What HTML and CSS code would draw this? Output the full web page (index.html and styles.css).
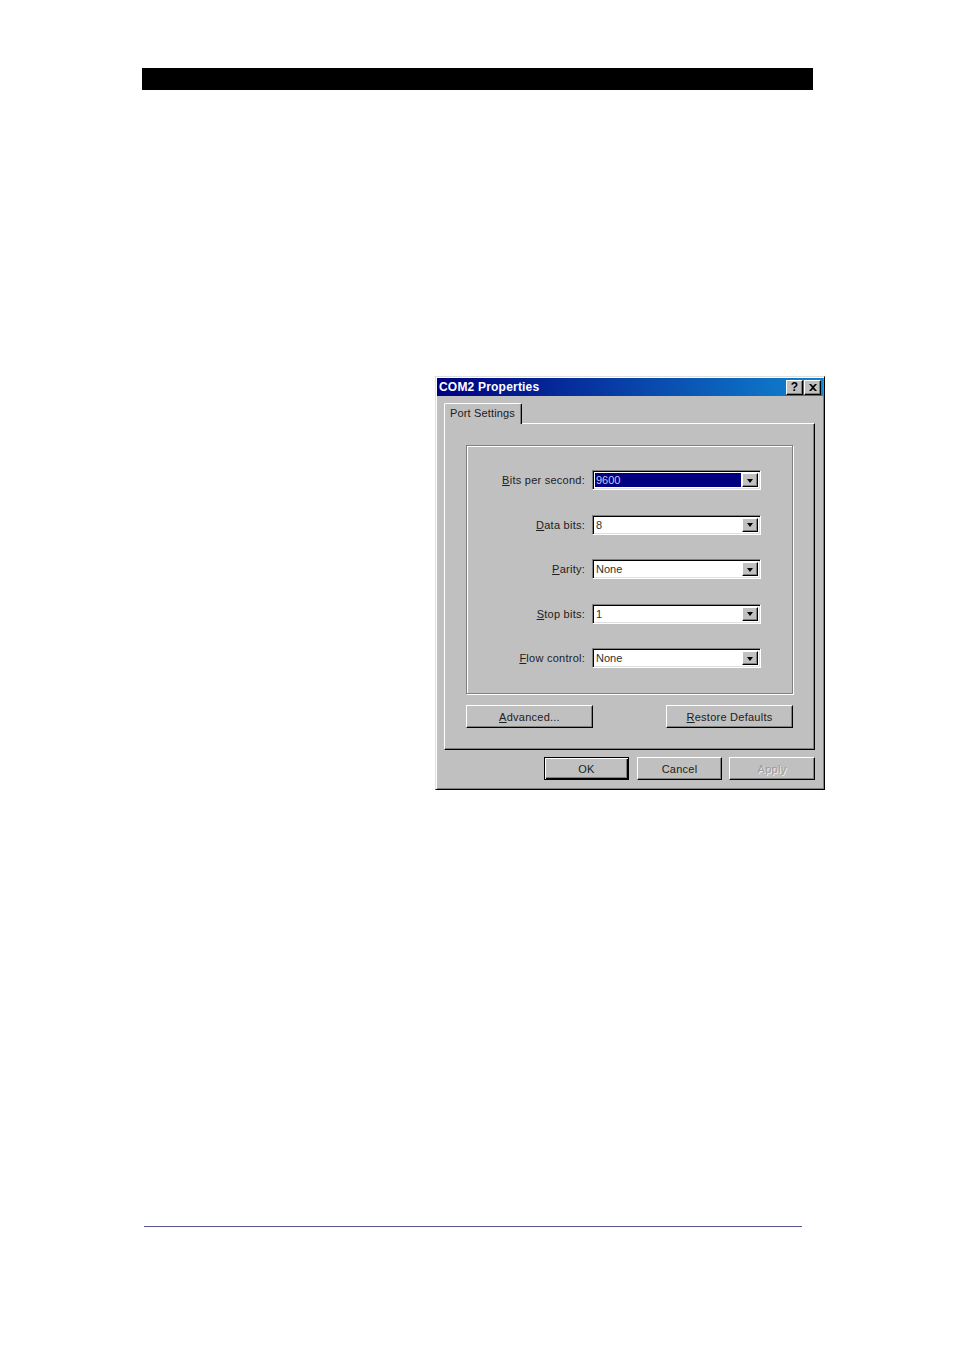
FILE: index.html
```html
<!DOCTYPE html>
<html>
<head>
<meta charset="utf-8">
<title>COM2 Properties</title>
<link rel="stylesheet" href="styles.css">
</head>
<body>
<div class="page">
  <div class="topbar"></div>
  <div class="dialog">
    <div class="titlebar">
      <span class="title">COM2 Properties</span>
      <div class="tbtns">
        <span class="tbtn help">?</span>
        <span class="tbtn close"><svg width="8" height="7" viewBox="0 0 8 7"><path d="M0 0h2l2 2 2-2h2L5 3.5 8 7H6L4 5 2 7H0l3-3.5z" fill="#000"/></svg></span>
      </div>
    </div>
    <div class="body">
      <div class="tabs"><div class="tab">Port Settings</div></div>
      <div class="panel">
        <div class="group">
          <div class="row">
            <span class="label"><u>B</u>its per second:</span>
            <div class="combo"><span class="field sel">9600</span><span class="drop"><span class="arrow"></span></span></div>
          </div>
          <div class="row">
            <span class="label"><u>D</u>ata bits:</span>
            <div class="combo"><span class="field">8</span><span class="drop"><span class="arrow"></span></span></div>
          </div>
          <div class="row">
            <span class="label"><u>P</u>arity:</span>
            <div class="combo"><span class="field">None</span><span class="drop"><span class="arrow"></span></span></div>
          </div>
          <div class="row">
            <span class="label"><u>S</u>top bits:</span>
            <div class="combo"><span class="field">1</span><span class="drop"><span class="arrow"></span></span></div>
          </div>
          <div class="row">
            <span class="label"><u>F</u>low control:</span>
            <div class="combo"><span class="field">None</span><span class="drop"><span class="arrow"></span></span></div>
          </div>
        </div>
        <div class="panelbtns">
          <span class="btn wide"><u>A</u>dvanced...</span>
          <span class="btn wide"><u>R</u>estore Defaults</span>
        </div>
      </div>
      <div class="footer">
        <span class="btn std default">OK</span>
        <span class="btn std">Cancel</span>
        <span class="btn std apply disabled">Apply</span>
      </div>
    </div>
  </div>
  <div class="bottomline"></div>
</div>
</body>
</html>
```
FILE: styles.css
```css
html, body {
  margin: 0;
  padding: 0;
  background: #ffffff;
}
.page {
  width: 954px;
  height: 1350px;
  padding-top: 68px;
  box-sizing: border-box;
  font-family: "Liberation Sans", Arial, sans-serif;
  font-size: 11px;
  color: #000;
}
.topbar {
  margin-left: 142px;
  width: 671px;
  height: 22px;
  background: #000;
}
.dialog {
  margin-top: 286px;
  margin-left: 435px;
  width: 390px;
  box-sizing: border-box;
  background: #c0c0c0;
  border: 1px solid;
  border-color: #dfdfdf #000 #000 #dfdfdf;
  box-shadow: inset 1px 1px #fff, inset -1px -1px #808080;
  padding: 1px;
}
.titlebar {
  height: 18px;
  display: flex;
  align-items: center;
  justify-content: space-between;
  background: linear-gradient(to right, #000080, #1084d0);
  padding-left: 2px;
}
.title {
  color: #fff;
  font-weight: bold;
  font-size: 12px;
  letter-spacing: 0.2px;
}
.tbtns {
  display: flex;
  gap: 1px;
  margin-right: 2px;
}
.tbtn {
  width: 17px;
  height: 15px;
  box-sizing: border-box;
  background: #c0c0c0;
  border: 1px solid;
  border-color: #fff #000 #000 #fff;
  box-shadow: inset -1px -1px #808080;
  display: flex;
  align-items: center;
  justify-content: center;
  font-weight: bold;
  font-size: 12px;
  line-height: 13px;
}
.body {
  padding: 7px 8px 8px 7px;
}
.tabs {
  height: 21px;
  display: flex;
  align-items: flex-end;
  position: relative;
  z-index: 1;
  margin-bottom: -1px;
}
.tab {
  height: 21px;
  width: 78px;
  box-sizing: border-box;
  border: 1px solid;
  border-color: #fff #000 transparent #fff;
  border-bottom: none;
  border-radius: 2px 2px 0 0;
  box-shadow: inset -1px 0 #808080;
  background: #c0c0c0;
  padding: 3px 0 0 5px;
  letter-spacing: 0.15px;
  color: #202020;
}
.panel {
  height: 327px;
  box-sizing: border-box;
  border: 1px solid;
  border-color: #fff #000 #000 #fff;
  box-shadow: inset -1px -1px #808080;
  padding: 21px;
  display: flex;
  flex-direction: column;
}
.group {
  height: 249px;
  box-sizing: border-box;
  border: 1px solid #808080;
  box-shadow: inset 1px 1px #fff, 1px 1px #fff;
  padding-top: 24px;
  display: flex;
  flex-direction: column;
  gap: 24.5px;
}
.row {
  display: flex;
  align-items: center;
  height: 20px;
}
.label {
  width: 118px;
  text-align: right;
  margin-right: 7px;
  letter-spacing: 0.25px;
  color: #202020;
}
.combo {
  width: 169px;
  height: 20px;
  box-sizing: border-box;
  border: 1px solid;
  border-color: #808080 #fff #fff #808080;
  box-shadow: inset 1px 1px #000, inset -1px -1px #dfdfdf;
  background: #fff;
  padding: 2px;
  display: flex;
  align-items: stretch;
}
.field {
  flex: 1;
  padding-left: 1px;
  line-height: 14px;
  color: #303030;
}
.field.sel {
  background: #000080;
  color: #c8c8f0;
  margin-right: 1px;
}
.drop {
  width: 16px;
  box-sizing: border-box;
  background: #c0c0c0;
  border: 1px solid;
  border-color: #fff #000 #000 #fff;
  box-shadow: inset -1px -1px #808080;
  display: flex;
  align-items: center;
  justify-content: center;
}
.arrow {
  width: 0;
  height: 0;
  border-left: 3.5px solid transparent;
  border-right: 3.5px solid transparent;
  border-top: 4px solid #000;
  margin-top: 1px;
}
.panelbtns {
  margin-top: 11px;
  display: flex;
  justify-content: space-between;
}
.btn {
  height: 23px;
  box-sizing: border-box;
  background: #c0c0c0;
  border: 1px solid;
  border-color: #fff #000 #000 #fff;
  box-shadow: inset -1px -1px #808080;
  display: flex;
  align-items: center;
  justify-content: center;
  letter-spacing: 0.25px;
  color: #202020;
}
.btn.wide {
  width: 127px;
}
.footer {
  margin-top: 7px;
  display: flex;
  justify-content: flex-end;
  gap: 7px;
}
.btn.std {
  width: 85px;
}
.btn.apply {
  width: 86px;
}
.btn.default {
  border: 1px solid #000;
  box-shadow: inset 1px 1px #fff, inset -1px -1px #000, inset -2px -2px #808080;
  margin-right: 1px;
}
.btn.disabled {
  color: #9a9a9a;
  text-shadow: 1px 1px #f0f0f0;
}
.bottomline {
  margin-top: 436px;
  margin-left: 144px;
  width: 658px;
  height: 1px;
  background: #55558f;
}
```
